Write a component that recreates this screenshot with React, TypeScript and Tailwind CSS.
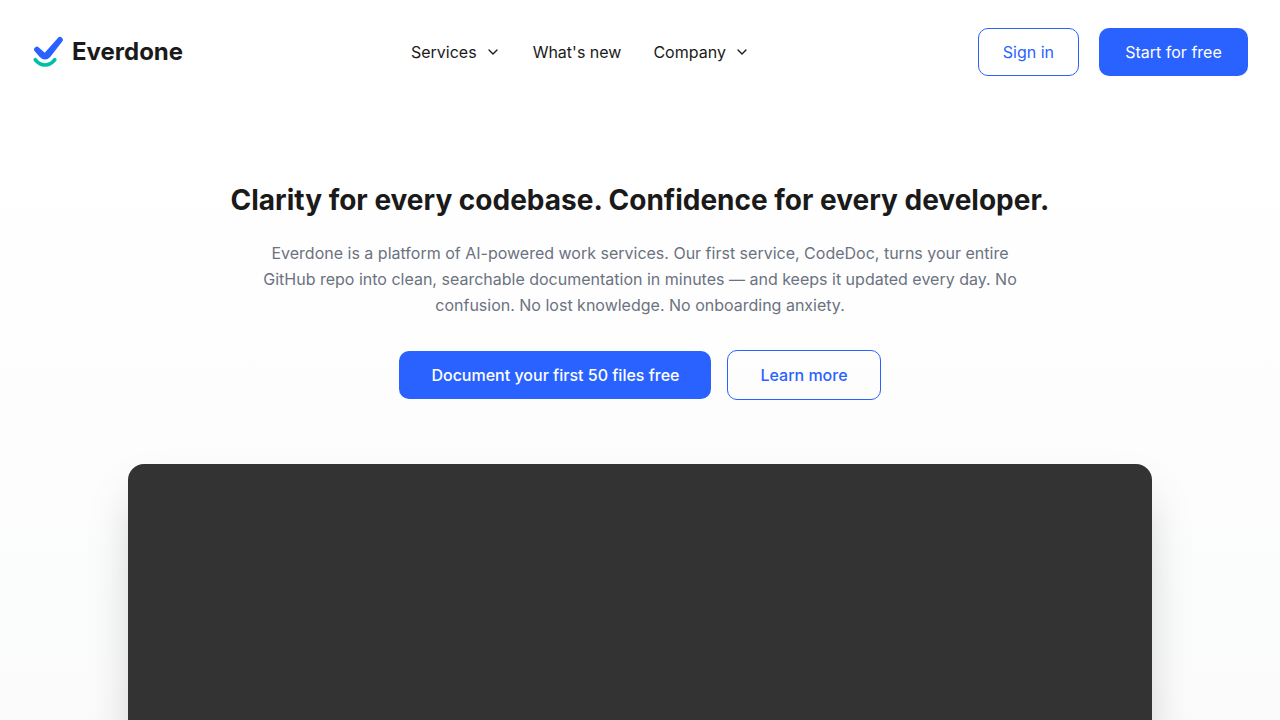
import { ChevronDown } from "lucide-react";

function Logo() {
  return (
    <svg viewBox="0 0 32 32" className="size-8" fill="none" strokeLinecap="round" strokeLinejoin="round" aria-hidden="true">
      <path d="M4.9 13.5 L10 18.1 Q12.9 20.8 15.5 17.9 L28 3.8 L16.2 19 Q12.9 22.6 9.6 18.9 Z" fill="#2962ff" stroke="#2962ff" strokeWidth="5.6" />
      <path d="M3.2 23.7 C8.5 30.8 17.5 30.8 22.8 23.7" stroke="#00bfa5" strokeWidth="3.6" />
    </svg>
  );
}

function MenuButton({ label }: { label: string }) {
  return (
    <button type="button" className="flex items-center gap-2">
      {label}
      <ChevronDown className="size-4" aria-hidden="true" />
    </button>
  );
}

export default function App() {
  return (
    <div className="h-screen overflow-hidden bg-[linear-gradient(to_bottom,#ffffff_15%,#fdfdfd_65%,#fbfdfc_83%,#fbfbfb_100%)] font-['Inter',sans-serif] text-base text-[#1a1a1a]">
      <header className="flex items-center justify-between bg-white px-8 py-7">
        <a href="#" className="flex items-center gap-2 text-2xl font-bold">
          <Logo />
          Everdone
        </a>
        <nav className="flex items-center gap-8">
          <MenuButton label="Services" />
          <a href="#new">What's new</a>
          <MenuButton label="Company" />
        </nav>
        <div className="flex items-center gap-5">
          <a href="#signin" className="flex h-12 items-center rounded-[10px] border border-[#2962ff] px-6 text-[#2962ff]">Sign in</a>
          <a href="#start" className="flex h-12 min-w-[149px] items-center justify-center rounded-[10px] bg-[#2962ff] px-6 text-white">Start for free</a>
        </div>
      </header>
      <main className="px-8 pt-19">
        <section className="mx-auto flex max-w-5xl flex-col items-center text-center">
          <h1 className="text-[28px] leading-10 font-bold">Clarity for every codebase. Confidence for every developer.</h1>
          <p className="mt-5 max-w-3xl leading-[26px] text-[#6b7280]">
            Everdone is a platform of AI-powered work services. Our first service, CodeDoc, turns your entire GitHub repo into clean, searchable documentation in minutes — and keeps it updated every day. No confusion. No lost knowledge. No onboarding anxiety.
          </p>
          <div className="mt-8 flex items-center gap-4 font-medium">
            <a href="#document" className="rounded-[10px] bg-[#2962ff] px-8 py-3 text-white">Document your first 50 files free</a>
            <a href="#learn" className="rounded-[10px] border border-[#2962ff] px-8 py-3 text-[#2962ff]">Learn more</a>
          </div>
          <div className="mt-16 aspect-video w-full rounded-2xl bg-[#333333] shadow-2xl" />
        </section>
      </main>
    </div>
  );
}
